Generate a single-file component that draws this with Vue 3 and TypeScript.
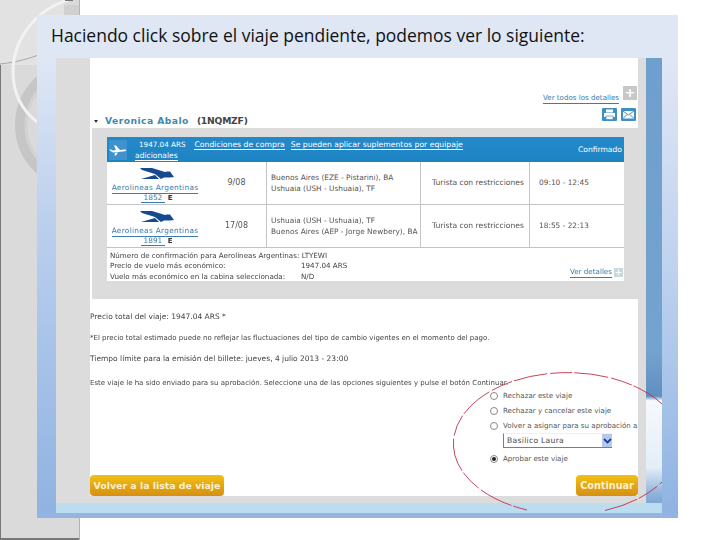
<script setup lang="ts">
interface Row { logoFlight: string; date: string; from: string; to: string; cabin: string; time: string }
const rows: Row[] = [
  { logoFlight: '1852', date: '9/08', from: 'Buenos Aires (EZE - Pistarini), BA', to: 'Ushuaia (USH - Ushuaia), TF', cabin: 'Turista con restricciones', time: '09:10 - 12:45' },
  { logoFlight: '1891', date: '17/08', from: 'Ushuaia (USH - Ushuaia), TF', to: 'Buenos Aires (AEP - Jorge Newbery), BA', cabin: 'Turista con restricciones', time: '18:55 - 22:13' }
]
const options = [
  { label: 'Rechazar este viaje', on: false },
  { label: 'Rechazar y cancelar este viaje', on: false },
  { label: 'Volver a asignar para su aprobación a', on: false }
]
</script>

<template>
  <div class="page">
    <svg class="deco" width="80" height="540" viewBox="0 0 80 540">
      <rect width="80" height="540" fill="#dadada" />
      <rect x="0" y="0" width="64" height="65" fill="#e2e2e2" />
      <rect x="64" y="5" width="15" height="60" fill="#d0d0d0" />
      <path d="M0 64 C20 62 40 56 64 44" stroke="#a8a8a8" stroke-width="1" fill="none" />
      <circle cx="80" cy="125" r="60" fill="none" stroke="#c6c6c6" stroke-width="10" />
      <circle cx="80" cy="125" r="54" fill="none" stroke="#d2d2d2" stroke-width="3" />
      <path d="M68 0 C35 10 13 40 13 72 C13 95 22 110 37 122" stroke="#f2f2f2" stroke-width="3" fill="none" />
      <rect x="65" y="0" width="8" height="1" fill="#777" />
      <rect x="79" y="0" width="1" height="540" fill="#b4b4b4" />
      <rect x="0" y="65" width="1" height="475" fill="#777" />
      <rect x="0" y="538" width="79" height="2" fill="#777" />
    </svg>

    <div class="slide">
      <h1 class="title">Haciendo click sobre el viaje pendiente, podemos ver lo siguiente:</h1>
      <div class="middle">
        <div class="strip-left"></div>
        <div class="center">
          <div class="shot">
            <div class="gutter-l"></div>
            <div class="content">
              <div class="top-link"><a class="lnk">Ver todos los detalles</a><span class="plus big">+</span></div>
              <div class="tools">
                <svg width="15" height="13" viewBox="0 0 15 13"><rect width="15" height="13" rx="1" fill="#3f8fc4"/><rect x="4" y="1.5" width="7" height="3" fill="#fff"/><rect x="2" y="5" width="11" height="4" fill="#fff"/><rect x="4" y="8" width="7" height="3.5" fill="#fff" stroke="#3f8fc4" stroke-width=".7"/></svg>
                <svg width="15" height="13" viewBox="0 0 15 13"><rect width="15" height="13" rx="1" fill="#3f8fc4"/><rect x="2" y="3" width="11" height="7.5" fill="#fff"/><path d="M2 3l5.5 4L13 3M2 10.5l4-4M13 10.5l-4-4" stroke="#3f8fc4" fill="none"/></svg>
              </div>
              <div class="name-row">
                <span class="caret"></span><span class="name">Veronica Abalo</span><span class="code">(1NQMZF)</span>
              </div>
              <div class="graybox">
                <div class="card">
                  <div class="head">
                    <div class="plane">
                      <svg width="18" height="11" viewBox="0 0 18 11"><path d="M0 4.5 2 4.5 3.5 5.5 7 5 5 0.5 7 0.5 11 5 15.5 4.5C17.5 4.5 18 5.5 16 6.2L5 7.5C3 7.5 1.5 6 0 4.5ZM6 8 9 7.6 7 10.5 5.5 10.5Z" fill="#fff"/></svg>
                    </div>
                    <div class="head-text">
                      <span class="price">1947.04 ARS</span><a class="hl">Condiciones de compra</a><a class="hl">Se pueden aplicar suplementos por equipaje</a><br />
                      <a class="hl add">adicionales</a>
                    </div>
                    <div class="status">Confirmado</div>
                  </div>
                  <div v-for="r in rows" :key="r.logoFlight" class="row">
                    <div class="c-air">
                      <svg class="logo" width="35" height="11" viewBox="0 0 35 11"><path d="M0 0H12L25 4 27 3.5H30L34 9 30 9.5 24 9.5 21 11 15 6 2 2Z" fill="#16498f"/><path d="M1 11 15 7 19 11Z" fill="#16498f"/></svg>
                      <a class="lnk air">Aerolineas Argentinas</a>
                      <div class="fl"><a class="lnk num">{{ r.logoFlight }}</a> <b>E</b></div>
                    </div>
                    <div class="c-date">{{ r.date }}</div>
                    <div class="c-route"><div>{{ r.from }}</div><div>{{ r.to }}</div></div>
                    <div class="c-cabin">{{ r.cabin }}</div>
                    <div class="c-time">{{ r.time }}</div>
                  </div>
                  <div class="facts">
                    <div>Número de confirmación para Aerolineas Argentinas: LTYEWI</div>
                    <div class="fact"><span>Precio de vuelo más económico:</span><span>1947.04 ARS</span></div>
                    <div class="fact"><span>Vuelo más económico en la cabina seleccionada:</span><span>N/D</span></div>
                    <div class="more"><a class="lnk">Ver detalles</a><span class="plus">+</span></div>
                  </div>
                </div>
              </div>
              <p class="p p1">Precio total del viaje: 1947.04 ARS *</p>
              <p class="p p2 narrow">*El precio total estimado puede no reflejar las fluctuaciones del tipo de cambio vigentes en el momento del pago.</p>
              <p class="p p3">Tiempo límite para la emisión del billete: jueves, 4 julio 2013 - 23:00</p>
              <p class="p p4 narrow">Este viaje le ha sido enviado para su aprobación. Seleccione una de las opciones siguientes y pulse el botón Continuar.</p>
              <div class="choices">
                <div v-for="o in options" :key="o.label" class="opt"><span class="radio"></span>{{ o.label }}</div>
                <div class="select"><span>Basilico Laura</span><span class="arrow"><svg width="9" height="6" viewBox="0 0 9 6"><path d="M1 1l3.5 3.5L8 1" fill="none" stroke="#1c3f94" stroke-width="1.8"/></svg></span></div>
                <div class="opt"><span class="radio on"></span>Aprobar este viaje</div>
              </div>
              <div class="buttons">
                <div class="btn wide">Volver a la lista de viaje</div>
                <div class="btn short">Continuar</div>
              </div>
            </div>
            <div class="gutter-r"></div>
            <div class="sky"></div>
          </div>
          <div class="strip-bottom"></div>
        </div>
        <div class="strip-right"></div>
      </div>
      <div class="floor"></div>
      <svg class="ellipse" width="209" height="146" viewBox="453 372 209 146">
        <path d="M605 510.5A114 71 0 0 0 662 482M662 404A114 71 0 1 0 527 510" fill="none" stroke="#c0304a" stroke-width="0.9" stroke-dasharray="34 2 22 3" />
      </svg>
    </div>
  </div>
</template>

<style>
html, body { margin: 0; background: #fff; }
</style>

<style scoped>
.page { position: relative; width: 720px; height: 540px; overflow: hidden; background: #fff; font-family: "DejaVu Sans", sans-serif; }
.deco { position: absolute; left: 0; top: 0; }
.slide { position: absolute; left: 37px; top: 15px; width: 641px; height: 503px; display: flex; flex-direction: column; background: #dfe7f5; }
.title { margin: 0; height: 43px; box-sizing: border-box; padding: 9px 0 0 14px; font: 400 17.48px/22px "Open Sans", sans-serif; color: #111; white-space: nowrap; }
.middle { display: flex; height: 455px; }
.strip-left { width: 19px; background: linear-gradient(#dfe7f5, #bcd0ee 35%, #8fb3e2); }
.center { width: 606px; display: flex; flex-direction: column; }
.strip-right { width: 16px; background: linear-gradient(#dfe7f5, #bcd0ee 50%, #8fb3e2); }
.floor { height: 5px; background: #95b5e0; }
.shot { height: 445px; display: flex; background: #dcdcdc; }
.strip-bottom { height: 10px; background: #bcdcef; }
.gutter-l { width: 34px; }
.gutter-r { width: 8px; }
.sky { width: 16px; background: linear-gradient(#6f9fce 0, #74a3d0 66%, #5f8fc0 76%, #f6f9fc 77%, #e4eef7 92%, #8fb2dc 98%, #7fa8d6 100%); }
.content { width: 548px; height: 438px; background: #fff; position: relative; font-size: 7.4px; line-height: 10px; color: #555; filter: blur(.35px); }
.lnk { color: #3b7ca8; border-bottom: 1px solid #3b7ca8; }
.top-link { display: flex; justify-content: flex-end; align-items: flex-end; height: 42px; gap: 4px; padding-right: 1px; }
.top-link .lnk { font-size: 7.1px; margin-bottom: -4px; }
.plus { display: inline-block; width: 9px; height: 9px; background: #c8d8e0; color: #fff; font: 700 9px/9px "DejaVu Sans", sans-serif; text-align: center; }
.plus.big { width: 14px; height: 14px; background: #c8c8c8; font-size: 13px; line-height: 14px; }
.tools { display: flex; justify-content: flex-end; gap: 4px; padding: 8px 2px 0 0; height: 13px; }
.name-row { height: 7px; margin-top: -4px; margin-bottom: 4px; display: flex; align-items: center; font-size: 9.2px; }
.caret { width: 0; height: 0; border: 2px solid transparent; border-top: 3px solid #333; border-bottom: 0; margin: 2px 5px 0 4px; }
.name { font-weight: 700; color: #4288ad; letter-spacing: .45px; margin-left: 2px; }
.code { font-weight: 700; color: #444; margin-left: 8px; letter-spacing: -.2px; }
.graybox { margin: 0 0 0 2px; height: 171px; box-sizing: border-box; padding: 9px 14px 0 15px; background: #dcdcdc; }
.card { width: 517px; height: 144px; background: #fff; }
.head { height: 25px; display: flex; background: linear-gradient(#2489cb, #1d84c2); color: #fff; position: relative; }
.plane { width: 18px; height: 20px; margin: 3px 0 0 2px; background: #3f92cd; display: flex; align-items: center; justify-content: center; }
.head-text { padding: 3px 0 0 8px; line-height: 10.5px; font-size: 7.7px; white-space: nowrap; }
.price { margin-left: 4px; margin-right: 9px; font-size: 7.2px; }
.hl { color: #fff; border-bottom: 1px solid #fff; margin-right: 6px; }
.add { font-size: 7.6px; margin: 0; }
.status { position: absolute; right: 2px; top: 8px; font-size: 7.6px; }
.row { height: 43px; display: grid; grid-template-columns: 100px 60px 154px 109px 94px; border-bottom: 1px solid #c4c4c4; box-sizing: border-box; align-items: center; }
.row > div { height: 100%; display: flex; flex-direction: column; justify-content: center; box-sizing: border-box; }
.row > .c-air { align-items: center; justify-content: flex-start; padding: 6px 4px 0 0; font-size: 7.4px; line-height: 10px; }
.logo { margin-bottom: 4px; margin-left: 4px; flex: none; }
.c-air .air { white-space: nowrap; letter-spacing: .28px; }
.fl { margin-top: -1px; margin-left: 3px; }
.fl .num { padding: 0 3px; }
.fl b { font-size: 7px; color: #333; }
.c-date { text-align: center; font-size: 8px; border-right: 1px solid #c4c4c4; }
.c-route { padding-left: 4px; border-right: 1px solid #c4c4c4; line-height: 11px; white-space: nowrap; }
.c-cabin { padding-left: 11px; border-right: 1px solid #c4c4c4; white-space: nowrap; font-size: 7.6px; }
.c-time { padding-left: 9px; white-space: nowrap; }
.facts { padding: 3px 3px 0; line-height: 10.3px; position: relative; height: 30px; box-sizing: border-box; color: #444; font-size: 7.15px; }
.fact { display: grid; grid-template-columns: 191px auto; }
.more { position: absolute; right: 1px; bottom: 0; display: flex; align-items: center; gap: 2px; }
.p { margin: 0; white-space: nowrap; font-size: 7.5px; line-height: 10px; color: #444; }
.narrow { font-size: 7px; }
.p1 { margin-top: 13px; }
.p2 { margin-top: 11px; }
.p3 { margin-top: 11px; }
.p4 { margin-top: 14px; }
.choices { position: absolute; left: 400px; top: 330px; width: 148px; }
.opt { height: 15px; display: flex; align-items: center; white-space: nowrap; font-size: 7.1px; color: #555; }
.radio { width: 6px; height: 6px; border-radius: 50%; border: 1px solid #888; background: #fff; margin-right: 5px; flex: none; position: relative; }
.radio.on::after { content: ""; position: absolute; inset: 1px; border-radius: 50%; background: #222; }
.select { width: 109px; height: 15px; margin: 0 0 3px 13px; box-sizing: border-box; border-left: 1px solid #6b7f9f; border-bottom: 1px solid #6b7f9f; border-top: 1px solid #eef; padding-left: 3px; display: flex; justify-content: space-between; align-items: center; font-size: 7.6px; letter-spacing: .3px; color: #444; }
.arrow { width: 10px; height: 13px; background: #b7caec; display: flex; align-items: center; justify-content: center; }
.buttons { position: absolute; left: 0; right: 0; bottom: 0; display: flex; justify-content: space-between; }
.btn { height: 21px; width: 62px; border-radius: 4px; background: linear-gradient(#f2c013, #d68f14); color: #fbf1d0; font: 700 9.7px/21px "DejaVu Sans", sans-serif; text-align: center; white-space: nowrap; }
.btn.wide { width: 134px; font-size: 9.4px; }
.ellipse { position: absolute; left: 416px; top: 357px; pointer-events: none; }
</style>
